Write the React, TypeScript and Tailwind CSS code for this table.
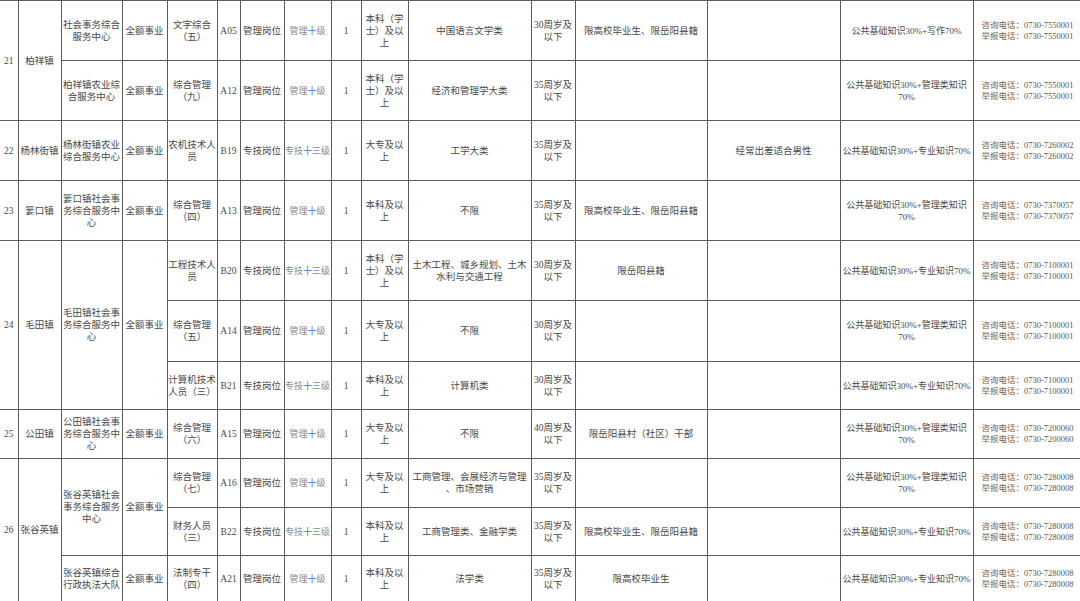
import React from "react";

const widths = [18, 43, 61, 45, 50, 23, 44, 47, 30, 47, 123, 44, 132, 133, 133, 107];

type CellProps = {
  lines?: string[];
  rowSpan?: number;
  children?: React.ReactNode;
  className?: string;
};

const Cell = ({ lines, rowSpan, children, className = "" }: CellProps) => (
  <td
    rowSpan={rowSpan}
    className={`border border-[#5c5c5c] p-0 align-middle text-center ${className}`}
  >
    {children ??
      (lines ?? []).map((l, i) => (
        <div key={i} className="whitespace-nowrap">
          {l}
        </div>
      ))}
  </td>
);

const Grade = ({ kind }: { kind: "gl" | "zj" }) => (
  <Cell className="text-[#8a8a8a] text-[9px]">
    <span className="whitespace-nowrap">
      {kind === "gl" ? "管理" : "专技"}
      <span className="text-[#3f78c4]">十</span>
      {kind === "gl" ? "级" : "三级"}
    </span>
  </Cell>
);

const Contact = ({ num }: { num: string }) => (
  <Cell className="text-left pl-[8px] text-[8.5px] leading-[11px] text-[#7a644c]">
    <div className="whitespace-nowrap">
      咨询电话：<span className="text-[#5f564c]">0730-{num}</span>
    </div>
    <div className="whitespace-nowrap">
      举报电话：<span className="text-[#5f564c]">0730-{num}</span>
    </div>
  </Cell>
);

const Exam = ({ lines }: { lines: string[] }) => <Cell lines={lines} className="text-[9px]" />;

const GL = ["公共基础知识30%+管理类知识", "70%"];
const ZY = ["公共基础知识30%+专业知识70%"];

export default function App() {
  return (
    <div className="w-[1080px] h-[601px] overflow-hidden bg-white">
      <table className="table-fixed border-collapse w-[1080px] text-[9.5px] leading-[12px] text-[#484848] font-['Liberation_Serif','Noto_Sans_CJK_SC',serif]">
        <colgroup>
          {widths.map((w, i) => (
            <col key={i} style={{ width: w }} />
          ))}
        </colgroup>
        <tbody>
          <tr className="h-[60px]">
            <Cell rowSpan={2} lines={["21"]} className="border-l-0" />
            <Cell rowSpan={2} lines={["柏祥镇"]} />
            <Cell lines={["社会事务综合", "服务中心"]} />
            <Cell lines={["全额事业"]} />
            <Cell lines={["文字综合", "（五）"]} />
            <Cell lines={["A05"]} />
            <Cell lines={["管理岗位"]} />
            <Grade kind="gl" />
            <Cell lines={["1"]} />
            <Cell lines={["本科（学", "士）及以", "上"]} />
            <Cell lines={["中国语言文学类"]} />
            <Cell lines={["30周岁及", "以下"]} />
            <Cell lines={["限高校毕业生、限岳阳县籍"]} />
            <Cell />
            <Exam lines={["公共基础知识30%+写作70%"]} />
            <Contact num="7550001" />
          </tr>
          <tr className="h-[60px]">
            <Cell lines={["柏祥镇农业综", "合服务中心"]} />
            <Cell lines={["全额事业"]} />
            <Cell lines={["综合管理", "（九）"]} />
            <Cell lines={["A12"]} />
            <Cell lines={["管理岗位"]} />
            <Grade kind="gl" />
            <Cell lines={["1"]} />
            <Cell lines={["本科（学", "士）及以", "上"]} />
            <Cell lines={["经济和管理学大类"]} />
            <Cell lines={["35周岁及", "以下"]} />
            <Cell />
            <Cell />
            <Exam lines={GL} />
            <Contact num="7550001" />
          </tr>
          <tr className="h-[60px]">
            <Cell lines={["22"]} className="border-l-0" />
            <Cell lines={["杨林街镇"]} />
            <Cell lines={["杨林街镇农业", "综合服务中心"]} />
            <Cell lines={["全额事业"]} />
            <Cell lines={["农机技术人", "员"]} />
            <Cell lines={["B19"]} />
            <Cell lines={["专技岗位"]} />
            <Grade kind="zj" />
            <Cell lines={["1"]} />
            <Cell lines={["大专及以", "上"]} />
            <Cell lines={["工学大类"]} />
            <Cell lines={["35周岁及", "以下"]} />
            <Cell />
            <Cell lines={["经常出差适合男性"]} />
            <Exam lines={ZY} />
            <Contact num="7260002" />
          </tr>
          <tr className="h-[60px]">
            <Cell lines={["23"]} className="border-l-0" />
            <Cell lines={["篓口镇"]} />
            <Cell lines={["篓口镇社会事", "务综合服务中", "心"]} />
            <Cell lines={["全额事业"]} />
            <Cell lines={["综合管理", "（四）"]} />
            <Cell lines={["A13"]} />
            <Cell lines={["管理岗位"]} />
            <Grade kind="gl" />
            <Cell lines={["1"]} />
            <Cell lines={["本科及以", "上"]} />
            <Cell lines={["不限"]} />
            <Cell lines={["35周岁及", "以下"]} />
            <Cell lines={["限高校毕业生、限岳阳县籍"]} />
            <Cell />
            <Exam lines={GL} />
            <Contact num="7370057" />
          </tr>
          <tr className="h-[60px]">
            <Cell rowSpan={3} lines={["24"]} className="border-l-0" />
            <Cell rowSpan={3} lines={["毛田镇"]} />
            <Cell rowSpan={3} lines={["毛田镇社会事", "务综合服务中", "心"]} />
            <Cell rowSpan={3} lines={["全额事业"]} />
            <Cell lines={["工程技术人", "员"]} />
            <Cell lines={["B20"]} />
            <Cell lines={["专技岗位"]} />
            <Grade kind="zj" />
            <Cell lines={["1"]} />
            <Cell lines={["本科（学", "士）及以", "上"]} />
            <Cell lines={["土木工程、城乡规划、土木", "水利与交通工程"]} />
            <Cell lines={["30周岁及", "以下"]} />
            <Cell lines={["限岳阳县籍"]} />
            <Cell />
            <Exam lines={ZY} />
            <Contact num="7100001" />
          </tr>
          <tr className="h-[61px]">
            <Cell lines={["综合管理", "（五）"]} />
            <Cell lines={["A14"]} />
            <Cell lines={["管理岗位"]} />
            <Grade kind="gl" />
            <Cell lines={["1"]} />
            <Cell lines={["大专及以", "上"]} />
            <Cell lines={["不限"]} />
            <Cell lines={["30周岁及", "以下"]} />
            <Cell />
            <Cell />
            <Exam lines={GL} />
            <Contact num="7100001" />
          </tr>
          <tr className="h-[48px]">
            <Cell lines={["计算机技术", "人员（三）"]} />
            <Cell lines={["B21"]} />
            <Cell lines={["专技岗位"]} />
            <Grade kind="zj" />
            <Cell lines={["1"]} />
            <Cell lines={["本科及以", "上"]} />
            <Cell lines={["计算机类"]} />
            <Cell lines={["30周岁及", "以下"]} />
            <Cell />
            <Cell />
            <Exam lines={ZY} />
            <Contact num="7100001" />
          </tr>
          <tr className="h-[49px]">
            <Cell lines={["25"]} className="border-l-0" />
            <Cell lines={["公田镇"]} />
            <Cell lines={["公田镇社会事", "务综合服务中", "心"]} />
            <Cell lines={["全额事业"]} />
            <Cell lines={["综合管理", "（六）"]} />
            <Cell lines={["A15"]} />
            <Cell lines={["管理岗位"]} />
            <Grade kind="gl" />
            <Cell lines={["1"]} />
            <Cell lines={["大专及以", "上"]} />
            <Cell lines={["不限"]} />
            <Cell lines={["40周岁及", "以下"]} />
            <Cell lines={["限岳阳县村（社区）干部"]} />
            <Cell />
            <Exam lines={GL} />
            <Contact num="7200060" />
          </tr>
          <tr className="h-[49px]">
            <Cell rowSpan={3} lines={["26"]} className="border-l-0" />
            <Cell rowSpan={3} lines={["张谷英镇"]} />
            <Cell rowSpan={2} lines={["张谷英镇社会", "事务综合服务", "中心"]} />
            <Cell rowSpan={2} lines={["全额事业"]} />
            <Cell lines={["综合管理", "（七）"]} />
            <Cell lines={["A16"]} />
            <Cell lines={["管理岗位"]} />
            <Grade kind="gl" />
            <Cell lines={["1"]} />
            <Cell lines={["大专及以", "上"]} />
            <Cell lines={["工商管理、会展经济与管理", "、市场营销"]} />
            <Cell lines={["35周岁及", "以下"]} />
            <Cell />
            <Cell />
            <Exam lines={GL} />
            <Contact num="7280008" />
          </tr>
          <tr className="h-[48px]">
            <Cell lines={["财务人员", "（三）"]} />
            <Cell lines={["B22"]} />
            <Cell lines={["专技岗位"]} />
            <Grade kind="zj" />
            <Cell lines={["1"]} />
            <Cell lines={["本科及以", "上"]} />
            <Cell lines={["工商管理类、金融学类"]} />
            <Cell lines={["35周岁及", "以下"]} />
            <Cell lines={["限高校毕业生、限岳阳县籍"]} />
            <Cell />
            <Exam lines={ZY} />
            <Contact num="7280008" />
          </tr>
          <tr className="h-[46px]">
            <Cell lines={["张谷英镇综合", "行政执法大队"]} />
            <Cell lines={["全额事业"]} />
            <Cell lines={["法制专干", "（四）"]} />
            <Cell lines={["A21"]} />
            <Cell lines={["管理岗位"]} />
            <Grade kind="gl" />
            <Cell lines={["1"]} />
            <Cell lines={["本科及以", "上"]} />
            <Cell lines={["法学类"]} />
            <Cell lines={["35周岁及", "以下"]} />
            <Cell lines={["限高校毕业生"]} />
            <Cell />
            <Exam lines={ZY} />
            <Contact num="7280008" />
          </tr>
        </tbody>
      </table>
    </div>
  );
}
